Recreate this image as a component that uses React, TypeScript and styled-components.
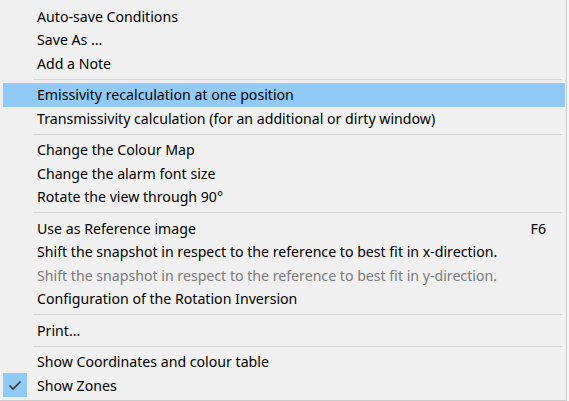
import styled, { createGlobalStyle } from "styled-components";

const GlobalStyle = createGlobalStyle`
  html, body {
    margin: 0;
    padding: 0;
    background: #f7f7f7;
  }
`;

const Menu = styled.div`
  width: 566px;
  height: 395px;
  padding: 4.5px 0 0 0;
  background: #f0f0f0;
  border-right: 1px solid #cccccc;
  border-bottom: 1px solid #cccccc;
  font-family: "Noto Sans", "Open Sans", sans-serif;
  font-size: 14.15px;
  color: #000;
  cursor: default;
`;

const Item = styled.div<{ $active?: boolean; $disabled?: boolean }>`
  height: 23.5px;
  margin: 0 0 0 3px;
  width: 562px;
  display: flex;
  align-items: center;
  background: ${(p) => (p.$active ? "#91c9f7" : "transparent")};
  color: ${(p) => (p.$disabled ? "#7a7a7a" : "#000")};
  white-space: nowrap;
`;

const CheckCell = styled.div<{ $checked?: boolean }>`
  width: 24px;
  height: 24px;
  flex: none;
  display: flex;
  align-items: center;
  justify-content: center;
  background: ${(p) => (p.$checked ? "#91c9f7" : "transparent")};
`;

const Label = styled.span`
  margin-left: 10px;
  flex: 1;
`;

const Shortcut = styled.span`
  margin-right: 19px;
`;

const Separator = styled.div`
  height: 8px;
  display: flex;
  align-items: center;
  padding-left: 33px;
  padding-right: 4px;

  &::after {
    content: "";
    flex: 1;
    height: 1px;
    background: #d5d5d5;
  }
`;

type Entry =
  | { sep: true }
  | {
      sep?: false;
      label: string;
      shortcut?: string;
      active?: boolean;
      disabled?: boolean;
      checked?: boolean;
    };

const entries: Entry[] = [
  { label: "Auto-save Conditions" },
  { label: "Save As ..." },
  { label: "Add a Note" },
  { sep: true },
  { label: "Emissivity recalculation at one position", active: true },
  { label: "Transmissivity calculation (for an additional or dirty window)" },
  { sep: true },
  { label: "Change the Colour Map" },
  { label: "Change the alarm font size" },
  { label: "Rotate the view through 90°" },
  { sep: true },
  { label: "Use as Reference image", shortcut: "F6" },
  {
    label:
      "Shift the snapshot in respect to the reference to best fit in x-direction.",
  },
  {
    label:
      "Shift the snapshot in respect to the reference to best fit in y-direction.",
    disabled: true,
  },
  { label: "Configuration of the Rotation Inversion" },
  { sep: true },
  { label: "Print..." },
  { sep: true },
  { label: "Show Coordinates and colour table" },
  { label: "Show Zones", checked: true },
];

const CheckMark = () => (
  <svg width="16" height="16" viewBox="0 0 16 16">
    <path
      d="M2.5 8.5 L6 12 L13.5 4.5"
      fill="none"
      stroke="#333"
      strokeWidth="1.6"
    />
  </svg>
);

const App: React.FC = () => {
  return (
    <>
      <GlobalStyle />
      <Menu>
        {entries.map((e, i) =>
          e.sep ? (
            <Separator key={i} />
          ) : (
            <Item key={i} $active={e.active} $disabled={e.disabled}>
              <CheckCell $checked={e.checked}>
                {e.checked ? <CheckMark /> : null}
              </CheckCell>
              <Label>{e.label}</Label>
              {e.shortcut ? <Shortcut>{e.shortcut}</Shortcut> : null}
            </Item>
          )
        )}
      </Menu>
    </>
  );
};

export default App;
